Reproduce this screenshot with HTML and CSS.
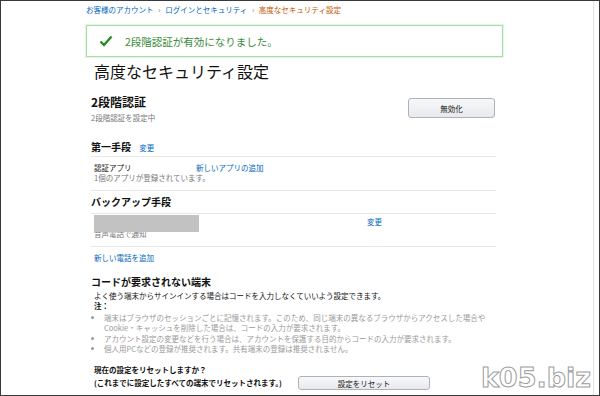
FILE: index.html
```
<!DOCTYPE html>
<html lang="ja">
<head>
    <meta charset="UTF-8">
    <title>高度なセキュリティ設定</title>
    <link rel="stylesheet" href="styles.css">
</head>
<body>
    <div class="frame">
        <div class="screen">
            <div class="breadcrumb">
                <a href="#">お客様のアカウント</a>
                <span class="sep">›</span>
                <a href="#">ログインとセキュリティ</a>
                <span class="sep">›</span>
                <span class="current">高度なセキュリティ設定</span>
            </div>

            <div class="alert-success">
                <svg class="check" width="14" height="12" viewBox="0 0 14 12">
                    <path d="M1.5 6.5 L5 10 L12.5 1.5" fill="none" stroke="#2a8a2a" stroke-width="2.4"/>
                </svg>
                <span>2段階認証が有効になりました。</span>
            </div>

            <h1>高度なセキュリティ設定</h1>

            <div class="content">
                <div class="tsv-row">
                    <div>
                        <h2>2段階認証</h2>
                        <p class="muted sub">2段階認証を設定中</p>
                    </div>
                    <button class="btn btn-disable">無効化</button>
                </div>

                <h3 class="first">第一手段 <a href="#" class="small-link">変更</a></h3>
                <div class="method">
                    <div class="method-line">
                        <span class="col-app">認証アプリ</span>
                        <a href="#">新しいアプリの追加</a>
                    </div>
                    <p class="muted">1個のアプリが登録されています。</p>
                </div>

                <h3 class="backup">バックアップ手段</h3>
                <div class="method method-backup">
                    <div class="method-line phone-line">
                        <span class="col-phone"><span class="redacted"></span></span>
                        <a href="#">変更</a>
                    </div>
                    <p class="muted">音声電話で通知</p>
                </div>
                <a href="#" class="add-phone">新しい電話を追加</a>

                <h3 class="devices">コードが要求されない端末</h3>
                <div class="notes">
                    <p>よく使う端末からサインインする場合はコードを入力しなくていいよう設定できます。</p>
                    <p class="bold">注：</p>
                    <ul>
                        <li>端末はブラウザのセッションごとに記憶されます。このため、同じ端末の異なるブラウザからアクセスした場合や Cookie・キャッシュを削除した場合は、コードの入力が要求されます。</li>
                        <li>アカウント設定の変更などを行う場合は、アカウントを保護する目的からコードの入力が要求されます。</li>
                        <li>個人用PCなどの登録が推奨されます。共有端末の登録は推奨されません。</li>
                    </ul>
                </div>

                <div class="reset">
                    <p class="bold">現在の設定をリセットしますか？</p>
                    <div class="reset-row">
                        <p class="bold">(これまでに設定したすべての端末でリセットされます。)</p>
                        <button class="btn btn-reset">設定をリセット</button>
                    </div>
                </div>
            </div>
        </div>
        <div class="watermark">k05.biz</div>
    </div>
</body>
</html>
```

FILE: styles.css
```
body {
    margin: 0;
    font-family: "Noto Sans CJK JP", "Noto Sans", sans-serif;
    color: #111;
    background: #fff;
}

a {
    color: #0066c0;
    text-decoration: none;
}

p {
    margin: 0;
}

.frame {
    position: relative;
    width: 600px;
    height: 396px;
    box-sizing: border-box;
    border: 1px solid #3a3a3a;
    overflow: hidden;
}

.screen {
    width: 593px;
    height: 100%;
    border-right: 1px solid #e2e2e2;
    box-sizing: border-box;
}

.breadcrumb {
    padding: 4px 0 0 85px;
    font-size: 7.5px;
    line-height: 10px;
}

.breadcrumb .sep {
    color: #777;
    margin: 0 3px;
}

.breadcrumb .current {
    color: #c45500;
}

.alert-success {
    display: flex;
    align-items: center;
    margin: 10px 0 0 85px;
    width: 417px;
    height: 32px;
    box-sizing: border-box;
    border: 1px solid #a3e0a3;
    box-shadow: 0 0 0 1px #e6f6e6;
    padding-left: 12px;
    font-size: 10.5px;
    color: #3a8c3a;
}

.alert-success .check {
    margin-right: 12px;
}

h1 {
    margin: 4px 0 0 93px;
    font-size: 16px;
    font-weight: normal;
    line-height: 20px;
}

.content {
    margin-left: 90px;
    width: 405px;
    font-size: 7.5px;
    line-height: 10px;
}

.muted {
    color: #777;
}

.tsv-row {
    display: flex;
    justify-content: space-between;
    align-items: flex-start;
    margin-top: 14px;
}

h2 {
    margin: 0;
    font-size: 12px;
    line-height: 14px;
}

.sub {
    margin-top: 4px;
}

.btn {
    font-family: inherit;
    font-size: 7.5px;
    color: #111;
    border: 1px solid #adb1b8;
    border-radius: 3px;
    background: linear-gradient(#f7f8fa, #e7e9ec);
    padding: 0;
}

.btn-disable {
    width: 87px;
    height: 20px;
    margin-top: 3px;
    margin-right: 1px;
}

h3 {
    margin: 0;
    font-size: 10px;
    line-height: 14px;
}

h3.first {
    margin-top: 17px;
}

.small-link {
    font-size: 7.5px;
    font-weight: normal;
    margin-left: 6px;
}

.method {
    border-top: 1px solid #e7e7e7;
    border-bottom: 1px solid #e7e7e7;
    margin-top: 1px;
    padding: 6px 3px 7px;
}

.method-line {
    display: flex;
}

.col-app {
    width: 102px;
}

h3.backup {
    margin-top: 4px;
}

.method-backup {
    margin-top: 4px;
    padding-top: 1px;
}

.phone-line {
    height: 14px;
    align-items: center;
}

.col-phone {
    width: 273px;
    align-self: flex-start;
}

.redacted {
    position: relative;
    z-index: 1;
    display: block;
    width: 105px;
    height: 17px;
    background: #c2c2c2;
}

.add-phone {
    display: block;
    margin: 6px 0 0 3px;
}

h3.devices {
    margin-top: 12px;
}

.notes {
    margin-top: 2px;
    padding-left: 3px;
    line-height: 10.4px;
}

.bold {
    font-weight: bold;
}

.notes ul {
    margin: 1px 0 0;
    padding-left: 10px;
    color: #999;
}

.reset {
    margin-top: 10px;
    padding-left: 3px;
    line-height: 12px;
}

.reset-row {
    display: flex;
    align-items: center;
    height: 14px;
}

.reset-row p {
    width: 204px;
}

.btn-reset {
    width: 132px;
    height: 14px;
}

.watermark {
    position: absolute;
    right: 8px;
    bottom: 2px;
    font-family: "DejaVu Sans", sans-serif;
    font-size: 27px;
    font-weight: bold;
    line-height: 30px;
    color: #fff;
    -webkit-text-stroke: 1px #9c9c9c;
}
```
